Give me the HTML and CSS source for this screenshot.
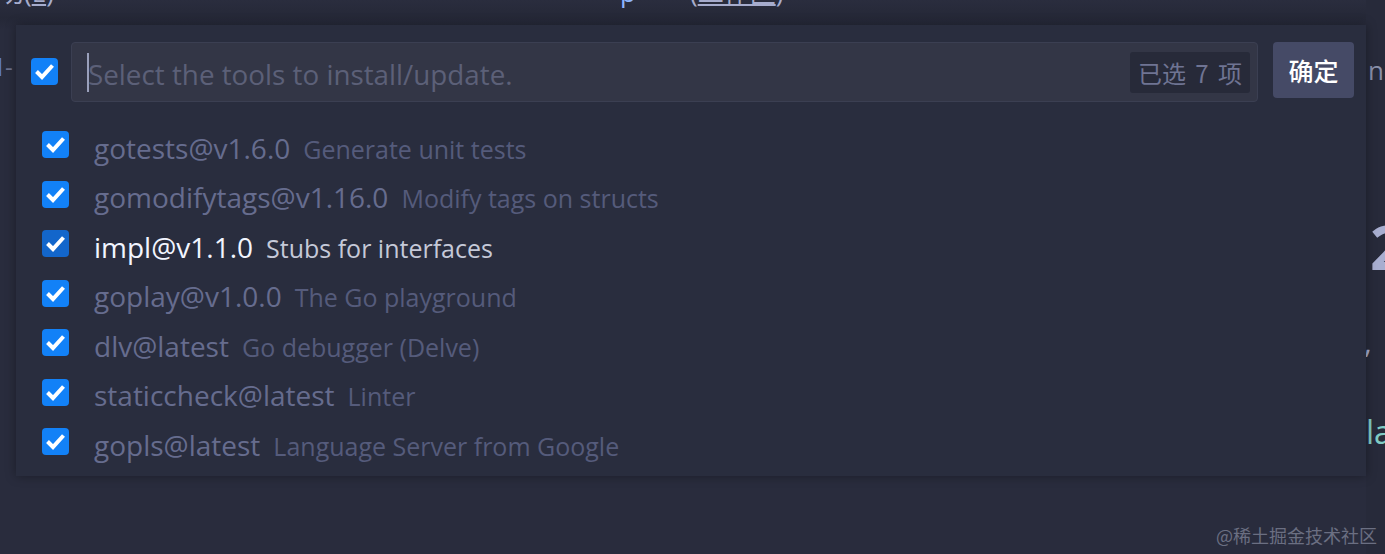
FILE: index.html
```html
<!DOCTYPE html>
<html>
<head>
<meta charset="utf-8">
<link rel="stylesheet" href="styles.css">
</head>
<body>
<div class="editor">
  <div class="top-text">
    <span class="tt tt-left">功(<u>E</u>)</span>
    <span class="tt tt-p">p</span>
    <span class="tt tt-mid">(<u>工作区</u>)</span>
  </div>
  <div class="edge-left"><span class="el-l">l</span>-</div>
  <div class="edge-right">
    <span class="er er-nc">nc</span>
    <span class="er er-two">2</span>
    <span class="er er-comma">,</span>
    <span class="er er-la">la</span>
  </div>
  <div class="watermark">@稀土掘金技术社区</div>
</div>

<div class="quick-pick">
  <div class="header">
    <span class="cb cb-all"><svg viewBox="0 0 27 27"><path d="M5.5 13.5 L11 19 L21.5 7.5"/></svg></span>
    <div class="input">
      <span class="caret"></span>
      <span class="placeholder">Select the tools to install/update.</span>
      <span class="badge">已选 7 项</span>
    </div>
    <button class="ok">确定</button>
  </div>
  <ul class="list">
    <li class="row"><span class="cb"><svg viewBox="0 0 27 27"><path d="M5.5 13.5 L11 19 L21.5 7.5"/></svg></span><span class="text"><span class="label">gotests@v1.6.0</span><span class="desc">Generate unit tests</span></span></li>
    <li class="row"><span class="cb"><svg viewBox="0 0 27 27"><path d="M5.5 13.5 L11 19 L21.5 7.5"/></svg></span><span class="text"><span class="label">gomodifytags@v1.16.0</span><span class="desc">Modify tags on structs</span></span></li>
    <li class="row focused"><span class="cb"><svg viewBox="0 0 27 27"><path d="M5.5 13.5 L11 19 L21.5 7.5"/></svg></span><span class="text"><span class="label">impl@v1.1.0</span><span class="desc">Stubs for interfaces</span></span></li>
    <li class="row"><span class="cb"><svg viewBox="0 0 27 27"><path d="M5.5 13.5 L11 19 L21.5 7.5"/></svg></span><span class="text"><span class="label">goplay@v1.0.0</span><span class="desc">The Go playground</span></span></li>
    <li class="row"><span class="cb"><svg viewBox="0 0 27 27"><path d="M5.5 13.5 L11 19 L21.5 7.5"/></svg></span><span class="text"><span class="label">dlv@latest</span><span class="desc">Go debugger (Delve)</span></span></li>
    <li class="row"><span class="cb"><svg viewBox="0 0 27 27"><path d="M5.5 13.5 L11 19 L21.5 7.5"/></svg></span><span class="text"><span class="label">staticcheck@latest</span><span class="desc">Linter</span></span></li>
    <li class="row"><span class="cb"><svg viewBox="0 0 27 27"><path d="M5.5 13.5 L11 19 L21.5 7.5"/></svg></span><span class="text"><span class="label">gopls@latest</span><span class="desc">Language Server from Google</span></span></li>
  </ul>
</div>
</body>
</html>
```

FILE: styles.css
```css
html, body {
  margin: 0;
  padding: 0;
  width: 1385px;
  height: 554px;
  overflow: hidden;
  background: #292c3d;
  font-family: "Open Sans", "Noto Sans", "Noto Sans CJK SC", sans-serif;
}

.editor {
  position: relative;
  width: 1385px;
  height: 554px;
  background: linear-gradient(#2a2d3e 0px, #252837 18px, #292c3d 30px);
}

.top-text {
  position: absolute;
  left: 0;
  top: -23px;
  width: 1385px;
  height: 30px;
  font-family: "Open Sans", "Noto Sans CJK SC", sans-serif;
  font-size: 26px;
  color: #a6accd;
  line-height: 30px;
}
.tt { position: absolute; top: 0; }
.tt-left { left: -2px; }
.tt-p { left: 620px; color: #8fb6ff; }
.tt-mid { left: 690px; }

.edge-left {
  position: absolute;
  left: -3px;
  top: 52px;
  font-size: 24px;
  color: #6c7290;
  line-height: 30px;
}
.el-l { color: #5c7ad0; margin-right: 2px; }

.edge-right { position: absolute; left: 1366px; top: 0; width: 19px; height: 554px; background: #272a3a; }
.er { position: absolute; left: 2px; }
.er-nc { top: 52px; font-size: 26px; color: #8a90aa; line-height: 36px; }
.er-two { top: 212px; left: 4px; font-size: 60px; font-weight: 700; color: #a8aed0; line-height: 70px; }
.er-comma { top: 322px; left: -2px; font-size: 30px; color: #a6accd; line-height: 40px; }
.er-la { top: 412px; left: 0; font-size: 32px; color: #80cbc4; line-height: 40px; }

.watermark {
  position: absolute;
  right: 8px;
  bottom: 7px;
  font-family: "Noto Sans CJK SC", sans-serif;
  font-size: 18px;
  line-height: 24px;
  color: #6b6f82;
}

.quick-pick {
  position: absolute;
  left: 16px;
  top: 25px;
  width: 1350px;
  height: 451px;
  box-sizing: border-box;
  padding: 17px 12px 0 15px;
  background: #292d3e;
  box-shadow: 0 0 10px rgba(0, 0, 0, 0.35);
}

.header {
  display: flex;
  align-items: flex-start;
}

.cb {
  flex: none;
  width: 27px;
  height: 27px;
  border-radius: 4px;
  background: #1281f7;
  display: flex;
}
.cb svg { width: 27px; height: 27px; }
.cb path { fill: none; stroke: #ffffff; stroke-width: 4; stroke-linejoin: miter; stroke-linecap: butt; }

.cb-all { margin-top: 16px; }

.input {
  flex: none;
  margin-left: 13px;
  width: 1187px;
  height: 60px;
  box-sizing: border-box;
  border: 1px solid #3b3f52;
  border-radius: 4px;
  background: #333646;
  display: flex;
  align-items: center;
  padding: 0 7px 0 15px;
}
.caret {
  width: 2px;
  height: 39px;
  background: #9aa0bb;
  margin-right: -1px;
}
.placeholder {
  flex: 1;
  font-size: 27.8px;
  color: #5c6078;
  white-space: nowrap;
  padding-top: 4px;
}
.badge {
  flex: none;
  height: 41px;
  box-sizing: border-box;
  padding: 0 8px;
  border-radius: 3px;
  background: #272a39;
  color: #6f7493;
  font-family: "Noto Sans CJK SC", sans-serif;
  font-size: 24px;
  word-spacing: 4px;
  line-height: 41px;
}

.ok {
  flex: none;
  margin-left: 15px;
  width: 81px;
  height: 56px;
  border: none;
  border-radius: 4px;
  background: #454a66;
  color: #ffffff;
  font-family: "Noto Sans CJK SC", sans-serif;
  font-size: 25px;
  font-weight: 500;
  padding: 0;
}

.list {
  list-style: none;
  margin: 18px 0 0 0;
  padding: 0;
}
.row {
  height: 49.5px;
  display: flex;
  align-items: center;
  padding-left: 11px;
  white-space: nowrap;
}
.row .cb { margin-right: 25px; }
.text {
  padding-top: 6px;
}
.label {
  font-size: 28px;
  color: #666c8e;
}
.desc {
  margin-left: 13px;
  font-size: 25px;
  color: #555b7b;
}
.focused .cb { background: #1366cb; }
.focused .label { color: #f2f5ff; }
.focused .desc { color: #c5c9d8; }
```
